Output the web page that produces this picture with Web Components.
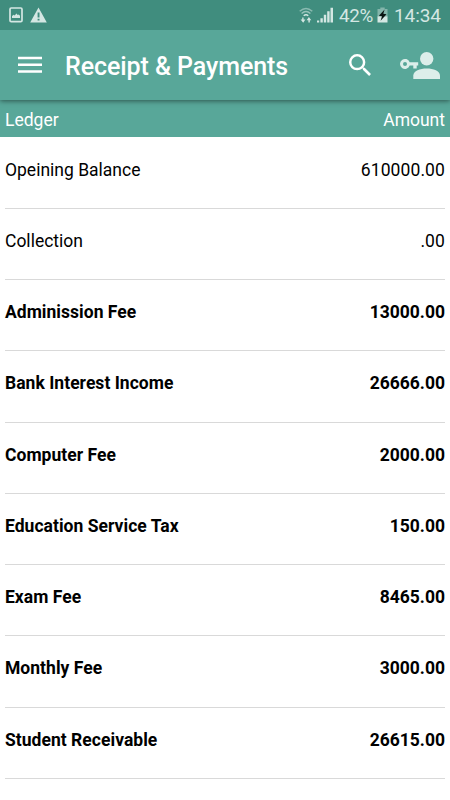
<!DOCTYPE html>
<html lang="en">
<head>
<meta charset="utf-8">
<meta name="viewport" content="width=device-width, initial-scale=1">
<title>Receipt &amp; Payments</title>
<style>
  body {
    margin: 0;
    background: #fff;
    font-family: Roboto, sans-serif;
  }
</style>
</head>
<body>
<receipt-app></receipt-app>
<script>
class StatusBar extends HTMLElement {
  constructor() {
    super();
    this.attachShadow({ mode: "open" });
    this.styles = `
      :host {
        display: flex;
        align-items: center;
        justify-content: space-between;
        box-sizing: border-box;
        position: relative;
        z-index: 1;
        height: 30px;
        padding: 0 10px 0 9px;
        background: #408d7e;
        color: #d4e7e3;
        font-size: 19px;
        line-height: 30px;
      }
      div {
        display: flex;
        align-items: center;
      }
      svg {
        display: block;
        fill: currentColor;
      }
      .alert { margin-left: 7px; }
      .signal { margin: 0 6px 0 4px; }
      .battery { margin: 0 6px 0 4px; }
      .percent, .clock { padding-top: 2px; }
      .percent { width: 34px; font-size: 18.8px; letter-spacing: -0.3px; }
      .clock { width: 46px; letter-spacing: -0.1px; }
    `;
  }

  connectedCallback() {
    this.render();
  }

  render() {
    this.shadowRoot.innerHTML = `
      <style>${this.styles}</style>
      <div>
        <svg width="14" height="16" viewBox="0 0 14 16">
          <rect x="1" y="1" width="12" height="13.6" rx="1.2" fill="none" stroke="currentColor" stroke-width="1.7"/>
          <path d="M3 11V9l1.700-1.200 1 .6L7.400 6.500l1.300 1.400 1-.5L11 8.700V11z"/>
        </svg>
        <svg class="alert" width="17" height="16" viewBox="0 0 17 16">
          <path fill-rule="evenodd" d="M8.500.5 16.800 15.500H.2zM7.600 5.500V10.500h1.900V5.500zM7.600 11.800v1.800h1.900v-1.800z"/>
        </svg>
      </div>
      <div>
        <svg width="14" height="17" viewBox="0 0 14 17">
          <g fill="none" stroke="currentColor" stroke-width="1.400">
            <path opacity=".5" d="M.7 4.300Q7-1.500 13.300 4.300"/>
            <path opacity=".6" d="M2.600 6.600Q7 2.500 11.400 6.600"/>
            <path d="M4.700 8.700Q7 6.800 9.300 8.700"/>
          </g>
          <path d="M4.600 10.500V12.500H6.400L4.200 15.800 1.600 12.500H3.200V10.500zM9.400 15.500V13.200H7.600L9.900 10 12.300 13.200H10.800V15.500z"/>
        </svg>
        <svg class="signal" width="16" height="16" viewBox="0 0 16 16">
          <path d="M0 13.500h2.200V15.500H0zM3.400 11.200h2.400V15.500H3.400zM6.800 7.800h2.400v7.700H6.800zM10.200 4.300h2.400v11.200h-2.400zM13.500.7H16v14.800h-2.500z"/>
        </svg>
        <span class="percent">42%</span>
        <svg class="battery" width="11" height="16" viewBox="0 0 11 16">
          <path opacity=".45" d="M3.300.5h4.400v1.500H10.500V10H.5V2h2.800z"/>
          <path d="M.5 9.500h10v6H.5z"/>
          <path fill="#0a1513" d="M7.600 2.500 1.900 8.700 5 9.300 3.600 13.700 9.500 7.300 6.300 6.700z"/>
        </svg>
        <span class="clock">14:34</span>
      </div>
    `;
  }
}

class AppBar extends HTMLElement {
  constructor() {
    super();
    this.attachShadow({ mode: "open" });
    this.styles = `
      :host {
        display: flex;
        align-items: center;
        box-sizing: border-box;
        position: relative;
        height: 70px;
        padding: 0 10px 0 18px;
        background: #58a799;
        color: #fff;
        box-shadow: 0 1px 5px rgba(0, 0, 0, 0.5);
      }
      h1 {
        flex: 1;
        margin: 4px 0 0 23px;
        font-size: 25px;
        font-weight: 500;
        line-height: 30px;
        letter-spacing: -0.07px;
        white-space: nowrap;
      }
      svg {
        display: block;
        fill: currentColor;
      }
      .login {
        margin-left: 29px;
        color: #dceeea;
      }
    `;
  }

  connectedCallback() {
    this.render();
  }

  render() {
    this.shadowRoot.innerHTML = `
      <style>${this.styles}</style>
      <svg width="24" height="18" viewBox="0 0 24 18">
        <path d="M0 .8h24v2.500H0zM0 7.500h24v2.500H0zM0 14.300h24v2.500H0z"/>
      </svg>
      <h1><slot></slot></h1>
      <svg width="22" height="22" viewBox="3 3 17.500 17.500">
        <path d="M15.500 14h-.79l-.28-.27A6.471 6.471 0 0 0 16 9.500 6.500 6.500 0 1 0 9.500 16c1.610 0 3.090-.59 4.230-1.570l.27.28v.79l5 4.990L20.490 19l-4.990-5zm-6 0C7.010 14 5 11.990 5 9.500S7.010 5 9.500 5 14 7.010 14 9.500 11.990 14 9.500 14z"/>
      </svg>
      <svg class="login" width="40" height="27" viewBox="0 0 40 27">
        <circle cx="26.700" cy="6.700" r="6.700"/>
        <path d="M13.300 27V23.500C13.300 18.900 20 16.500 26.700 16.500S40 18.900 40 23.500V27z"/>
        <path fill-rule="evenodd" d="M9.700 10.200H18.200V13.600H16.700V16.500H13.300V13.600H9.700A5 5 0 1 1 9.700 10.200zM5 9.900a2 2 0 1 0 0 4 2 2 0 0 0 0-4z"/>
      </svg>
    `;
  }
}

class LedgerHead extends HTMLElement {
  constructor() {
    super();
    this.attachShadow({ mode: "open" });
    this.styles = `
      :host {
        display: flex;
        justify-content: space-between;
        box-sizing: border-box;
        height: 37.4px;
        margin-bottom: 0.2px;
        padding: 0 5px;
        background: #58a799;
        color: #fff;
        font-size: 17.5px;
        line-height: 41px;
      }
    `;
  }

  connectedCallback() {
    this.shadowRoot.innerHTML = `
      <style>${this.styles}</style>
      <slot name="name"></slot>
      <slot name="amount"></slot>
    `;
  }
}

class LedgerRow extends HTMLElement {
  constructor() {
    super();
    this.attachShadow({ mode: "open" });
    this.styles = `
      :host {
        display: flex;
        justify-content: space-between;
        box-sizing: border-box;
        height: 71.25px;
        margin: 0 5px;
        padding-top: 22px;
        border-bottom: 1px solid #d9d9d9;
        color: #000;
        font-size: 17.5px;
        line-height: 21px;
      }
      :host([bold]) {
        font-weight: 700;
        letter-spacing: 0.03px;
      }
      span {
        letter-spacing: 0;
      }
      :host(:not([bold])) span {
        letter-spacing: 0.1px;
      }
    `;
  }

  connectedCallback() {
    this.shadowRoot.innerHTML = `
      <style>${this.styles}</style>
      <slot></slot>
      <span>${this.getAttribute("amount")}</span>
    `;
  }
}

class ReceiptApp extends HTMLElement {
  constructor() {
    super();
    this.attachShadow({ mode: "open" });
    this.styles = `
      :host {
        display: block;
        height: 100vh;
        overflow: hidden;
        background: #fff;
      }
    `;
  }

  connectedCallback() {
    this.render();
  }

  render() {
    this.shadowRoot.innerHTML = `
      <style>${this.styles}</style>
      <status-bar></status-bar>
      <app-bar>Receipt &amp; Payments</app-bar>
      <ledger-head>
        <span slot="name">Ledger</span>
        <span slot="amount">Amount</span>
      </ledger-head>
      <main>
        <ledger-row amount="610000.00">Opeining Balance</ledger-row>
        <ledger-row amount=".00">Collection</ledger-row>
        <ledger-row bold amount="13000.00">Adminission Fee</ledger-row>
        <ledger-row bold amount="26666.00">Bank Interest Income</ledger-row>
        <ledger-row bold amount="2000.00">Computer Fee</ledger-row>
        <ledger-row bold amount="150.00">Education Service Tax</ledger-row>
        <ledger-row bold amount="8465.00">Exam Fee</ledger-row>
        <ledger-row bold amount="3000.00">Monthly Fee</ledger-row>
        <ledger-row bold amount="26615.00">Student Receivable</ledger-row>
      </main>
    `;
  }
}

customElements.define("status-bar", StatusBar);
customElements.define("app-bar", AppBar);
customElements.define("ledger-head", LedgerHead);
customElements.define("ledger-row", LedgerRow);
customElements.define("receipt-app", ReceiptApp);
</script>
</body>
</html>
